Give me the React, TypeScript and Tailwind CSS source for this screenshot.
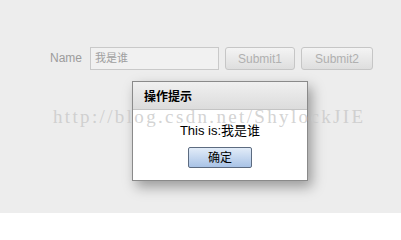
import React from "react";

export default function App() {
  return (
    <div className="relative w-[401px] h-[213px] overflow-hidden bg-[#ededed] font-['Liberation_Sans','Noto_Sans_CJK_SC',sans-serif]">
      {/* form row */}
      <div className="flex items-center pt-[47px] pl-[50px]">
        <span className="text-[12px] text-[#9c9c9c] w-[40px] leading-none -mt-[1px]">Name</span>
        <div className="w-[129px] h-[23px] border border-[#c9c9c9] bg-[#f1f1f1] flex items-center pl-[4px] text-[11px] text-[#a0a0a0]">
          我是谁
        </div>
        <div className="ml-[6px] w-[70px] h-[23px] rounded-[3px] border border-[#c6c6c6] bg-gradient-to-b from-[#f4f4f4] to-[#dedede] flex items-center justify-center text-[12px] text-[#b0b0b0]">
          Submit1
        </div>
        <div className="ml-[6px] w-[72px] h-[23px] rounded-[3px] border border-[#c6c6c6] bg-gradient-to-b from-[#f4f4f4] to-[#dedede] flex items-center justify-center text-[12px] text-[#b0b0b0]">
          Submit2
        </div>
      </div>

      {/* modal dialog */}
      <div className="absolute left-[132px] top-[81px] w-[176px] h-[100px] border border-[#8a8a8a] bg-white shadow-[4px_6px_12px_rgba(0,0,0,0.35)] flex flex-col">
        <div className="h-[28px] shrink-0 bg-gradient-to-b from-[#f0f0f0] to-[#dcdcdc] border-b border-[#c4c4c4] flex items-center pl-[11px]">
          <span className="text-[12px] font-bold text-black font-['Noto_Sans_CJK_SC',sans-serif] leading-none">操作提示</span>
        </div>
        <div className="flex flex-col items-center pt-[13px]">
          <span className="text-[13px] leading-[16px] text-black">This is:我是谁</span>
          <div className="mt-[8px] w-[64px] h-[21px] rounded-[2px] border border-[#5c6b80] bg-gradient-to-b from-[#e2ecf8] to-[#a9c3e6] flex items-center justify-center text-[12px] text-black leading-none">
            确定
          </div>
        </div>
      </div>

      {/* watermark */}
      <span className="absolute left-[53px] top-[106px] text-[19px] leading-[22px] tracking-[2.35px] text-[#c8c8c8]/80 font-['Liberation_Serif',serif] whitespace-nowrap pointer-events-none">
        http://blog.csdn.net/ShylockJIE
      </span>
    </div>
  );
}
